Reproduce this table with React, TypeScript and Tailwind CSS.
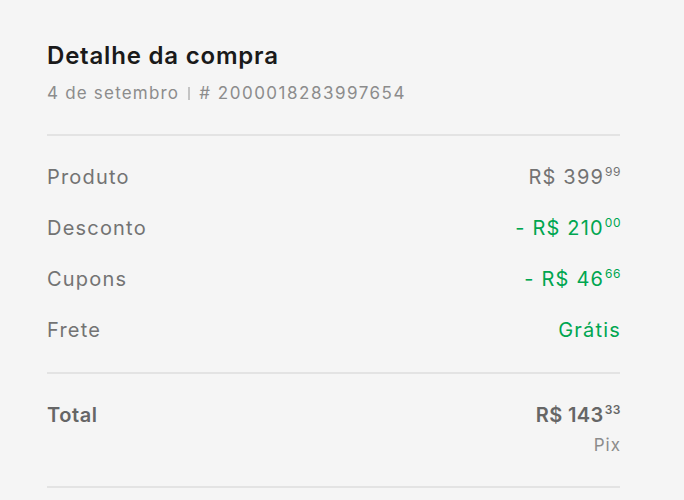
import React from 'react';

const font = { fontFamily: 'Inter, "Open Sans", sans-serif' };

interface Row {
  label: string;
  value: string;
  cents?: string;
  green?: boolean;
}

const rows: Row[] = [
  { label: 'Produto', value: 'R$ 399', cents: '99' },
  { label: 'Desconto', value: '- R$ 210', cents: '00', green: true },
  { label: 'Cupons', value: '- R$ 46', cents: '66', green: true },
  { label: 'Frete', value: 'Grátis', green: true },
];

const Price: React.FC<{ value: string; cents?: string }> = ({ value, cents }) => (
  <span className="inline-flex items-start">
    <span>{value}</span>
    {cents && (
      <span className="text-[12px] leading-none tracking-[0.5px] ml-[1px] mt-[1px]">{cents}</span>
    )}
  </span>
);

export default function App() {
  return (
    <div className="w-[684px] h-[500px] bg-[#f5f5f5] overflow-hidden" style={font}>
      <div className="w-[573px] ml-[47px] pt-[41px]">
        <h2 className="text-[24px] leading-[30px] font-semibold tracking-[0.8px] text-[#1a1a1a]">
          Detalhe da compra
        </h2>
        <div className="mt-[11px] flex items-center text-[17px] leading-[22px] tracking-[1.2px] text-[#8c8c8c]">
          <span>4 de setembro</span>
          <span className="mx-[9px] w-[2px] h-[13px] bg-[#c4c4c4]" />
          <span className="tracking-[1.5px]"># 2000018283997654</span>
        </div>

        <div className="mt-[30px] h-[2px] bg-[#e3e3e3]" />

        <div className="pt-[29px] pb-[30px] flex flex-col gap-[27px]">
          {rows.map((r) => (
            <div
              key={r.label}
              className="flex justify-between text-[20px] leading-[24px] tracking-[1.2px]"
            >
              <span className="text-[#737373]">{r.label}</span>
              <span className={`-mr-[1px] ${r.green ? 'text-[#00a650]' : 'text-[#737373]'}`}>
                <Price value={r.value} cents={r.cents} />
              </span>
            </div>
          ))}
        </div>

        <div className="h-[2px] bg-[#e3e3e3]" />

        <div className="pt-[29px] pb-[31px] flex justify-between text-[#666666]">
          <span className="text-[20px] leading-[24px] font-semibold tracking-[0.6px]">Total</span>
          <div className="flex flex-col items-end -mr-[1px]">
            <span className="text-[20px] leading-[24px] font-semibold tracking-[0.4px]">
              <Price value="R$ 143" cents="33" />
            </span>
            <span className="mt-[8px] text-[17px] leading-[20px] tracking-[1px] text-[#8c8c8c]">Pix</span>
          </div>
        </div>

        <div className="h-[2px] bg-[#e3e3e3]" />
      </div>
    </div>
  );
}
